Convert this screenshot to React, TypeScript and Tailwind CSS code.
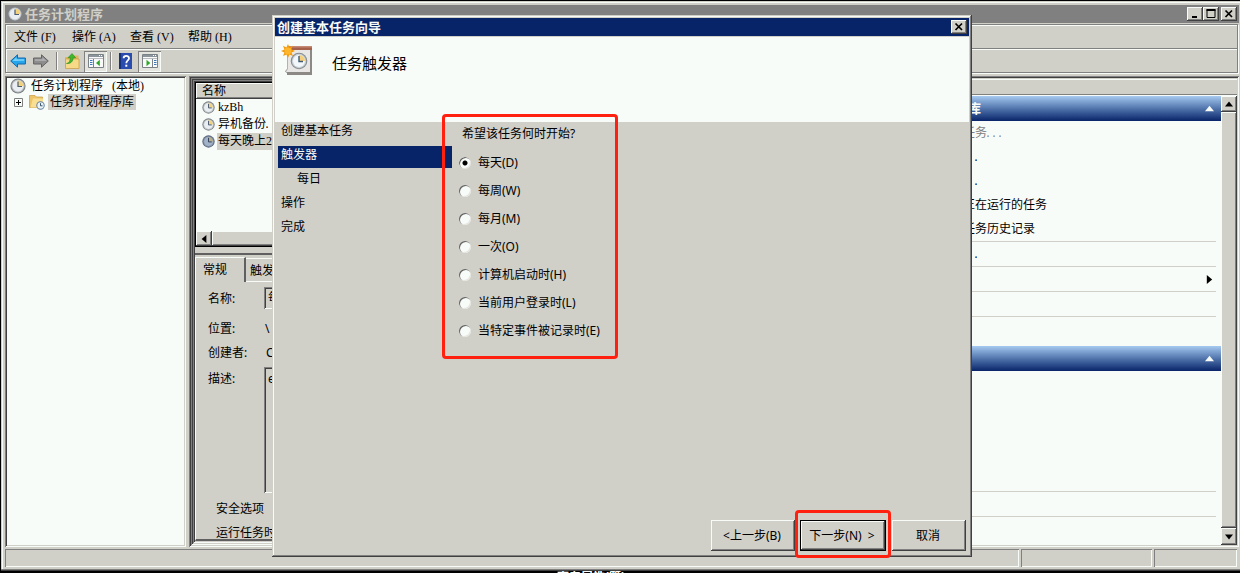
import { useState } from "react";
import type { ReactNode } from "react";
import clsx from "clsx";

const SERIF = "font-['Liberation_Serif','Noto_Sans_CJK_SC',serif]";
const SANS = "font-['Noto_Sans','Noto_Sans_CJK_SC',sans-serif]";

const RAISED =
  "bg-[#d0cfc8] shadow-[inset_-1px_-1px_0_#404040,inset_1px_1px_0_#f8fcf8,inset_-2px_-2px_0_#808080]";
const SUNKEN =
  "shadow-[inset_1px_1px_0_#808080,inset_-1px_-1px_0_#f8fcf8,inset_2px_2px_0_#404040,inset_-2px_-2px_0_#d0cfc8]";
const STATUS = "shadow-[inset_1px_1px_0_#808080,inset_-1px_-1px_0_#f8fcf8]";

const MENUS = ["文件 (F)", "操作 (A)", "查看 (V)", "帮助 (H)"];

const TASKS = [
  { name: "kzBh", dots: false, selected: false },
  { name: "异机备份", dots: true, selected: false },
  { name: "每天晚上2点", dots: false, selected: true },
];

const STEPS = [
  { label: "创建基本任务", active: false, nested: false },
  { label: "触发器", active: true, nested: false },
  { label: "每日", active: false, nested: true },
  { label: "操作", active: false, nested: false },
  { label: "完成", active: false, nested: false },
];

const TRIGGERS = [
  { id: "daily", label: "每天(D)" },
  { id: "weekly", label: "每周(W)" },
  { id: "monthly", label: "每月(M)" },
  { id: "once", label: "一次(O)" },
  { id: "startup", label: "计算机启动时(H)" },
  { id: "logon", label: "当前用户登录时(L)" },
  { id: "event", label: "当特定事件被记录时(E)" },
];

const ACTIONS = [
  { label: "创建基本任务", dots: true, disabled: true },
  { label: "创建任务", dots: true, disabled: false },
  { label: "导入任务", dots: true, disabled: false },
  { label: "显示所有正在运行的任务", dots: false, disabled: false },
  { label: "启用所有任务历史记录", dots: false, disabled: false },
];

function Dots() {
  return <span className="-ml-[2px] font-['Liberation_Mono',monospace] text-[10px]">...</span>;
}

function Clock({ className, dark }: { className: string; dark?: boolean }) {
  return (
    <svg viewBox="0 0 16 16" className={className} aria-hidden="true">
      <circle cx="8" cy="8" r="7.6" fill={dark ? "#56647c" : "#7c8084"} />
      <circle cx="8" cy="8" r="6.5" fill={dark ? "#8796ac" : "#c0c4c8"} />
      <circle cx="8" cy="8" r="5.4" fill={dark ? "#a3b3c8" : "#e8eef2"} />
      <path d="M8 8V2.6A5.4 5.4 0 0 1 13.4 8Z" fill={dark ? "#b9ad84" : "#f2d27c"} />
      <path d="M8 3.5V8.5H12" fill="none" stroke={dark ? "#33415c" : "#4c5c70"} strokeWidth="1.2" />
    </svg>
  );
}

function Arrow({ back }: { back?: boolean }) {
  return (
    <svg viewBox="0 0 16 14" className="h-[14px] w-4" aria-hidden="true">
      <path
        d={back ? "M.7 7 7.5 .8V4H15.4V10H7.5V13.2Z" : "M15.3 7 8.5 .8V4H.6V10H8.5V13.2Z"}
        fill={back ? "#27a5ea" : "#8d8d8d"}
        stroke={back ? "#1269ae" : "#636363"}
      />
      <path
        d={back ? "M2.5 7 6.5 3.3V5.2H14.2V6.8Z" : "M13.5 7 9.5 3.3V5.2H1.8V6.8Z"}
        fill={back ? "#7cd3fa" : "#b0b0b0"}
      />
    </svg>
  );
}

function FolderUp() {
  return (
    <svg viewBox="0 0 16 16" className="size-4" aria-hidden="true">
      <path d="M1 4H6L8 2.5H14.5V15H1Z" fill="#e2b75a" />
      <path d="M1.5 6H15V15.5H1.5Z" fill="#f7da88" stroke="#c79a41" strokeWidth=".7" />
      <path d="M2.5 10.5C5 10 6.2 8 6.4 4.7H4L8 .6 11.6 4.7H9.2C9 8.5 6.5 11 2.5 10.5Z" fill="#3fb82c" stroke="#268b1c" strokeWidth=".6" />
    </svg>
  );
}

function PaneIcon({ flip }: { flip?: boolean }) {
  return (
    <svg viewBox="0 0 16 14" className="h-[14px] w-4" aria-hidden="true">
      <path d="M.5.5H15.5V13.5H.5Z" fill="#fafafa" stroke="#7b8186" />
      <path d="M1 1H15V3H1Z" fill="#8d959c" />
      <path d="M11 1.5H12M13 1.5H14" stroke="#fff" />
      <path d="M1 4.5H15" stroke="#b8bcc0" />
      <path d={flip ? "M10.5 5V13" : "M5.5 5V13"} stroke="#7b8186" />
      <path d={flip ? "M12 6.5H14.5M12 8.5H14.5M12 10.5H14.5" : "M2 6.5H4.5M2 8.5H4.5M2 10.5H4.5"} stroke="#3c78b8" />
      <path d={flip ? "M4.5 5.7V12.3L8.3 9Z" : "M11.8 5.7V12.3L8 9Z"} fill="#2fa82a" />
    </svg>
  );
}

function HelpIcon() {
  return (
    <svg viewBox="0 0 13 16" className="h-4 w-[13px]" aria-hidden="true">
      <path d="M0 0H13V16H0Z" fill="#2a4cae" />
      <path d="M0 0H2V16H0Z" fill="#17307c" />
      <path d="M4.6 5.2C4.6 2 10 2 10 5.2 10 7.5 7.3 7.3 7.3 10.2" fill="none" stroke="#fff" strokeWidth="1.8" />
      <path d="M6.3 11.7H8.3V13.7H6.3Z" fill="#fff" />
    </svg>
  );
}

function LibraryIcon() {
  return (
    <svg viewBox="0 0 16 16" className="size-4 shrink-0" aria-hidden="true">
      <path d="M.5 1.5H6L7.5 3H13.5V13.5H.5Z" fill="#edc566" stroke="#c59a43" strokeWidth=".7" />
      <path d="M4 4.5H14V13.5H1.5Z" fill="#f9df94" />
      <circle cx="11.5" cy="11.5" r="4.2" fill="#67829b" />
      <circle cx="11.5" cy="11.5" r="3.2" fill="#e8f2f8" />
      <path d="M11.5 9.2V11.8H13.5" fill="none" stroke="#38536c" />
    </svg>
  );
}

function WizardIcon() {
  return (
    <svg viewBox="0 0 32 32" className="size-8" aria-hidden="true">
      <path d="M6 3H31V31H6V29L4 27.5 6 25Z" fill="#8d8a86" />
      <path d="M6 6H29V28H5L6 25Z" fill="#e9e7e5" />
      <path d="M6.5 6V25L4.5 27.5" fill="none" stroke="#b5b2ae" />
      <path d="M7 2H31V6H7Z" fill="#a5614a" />
      <path d="M7 2H31V3.5H7Z" fill="#c58a74" />
      <circle cx="18" cy="17" r="8.3" fill="#878d91" />
      <circle cx="18" cy="17" r="7.2" fill="#c9d2d6" />
      <circle cx="18" cy="17" r="6" fill="#f1f7fa" />
      <path d="M18 17V11A6 6 0 0 1 24 17Z" fill="#f5cf79" />
      <path d="M18 12V17.5H22" fill="none" stroke="#405a74" strokeWidth="1.4" />
      <path d="M7 0 8.4 3.4 11.8 1.8 10.4 5.3 14 7 10.4 8.4 12 12 8.4 10.4 7 14 5.4 10.4 2 12 3.5 8.4 0 7 3.5 5.4 2 1.8 5.4 3.4Z" fill="#f29a0a" />
      <circle cx="7" cy="7" r="3.4" fill="#ffb62a" />
    </svg>
  );
}

function Triangle({ dir, className }: { dir: "up" | "down" | "left" | "right"; className: string }) {
  const paths = { up: "M0 8 5 2 10 8Z", down: "M0 2 5 8 10 2Z", left: "M8 0 2 5 8 10Z", right: "M2 0 8 5 2 10Z" };
  return (
    <svg viewBox="0 0 10 10" className={className} fill="currentColor" aria-hidden="true">
      <path d={paths[dir]} />
    </svg>
  );
}

function CaptionButton({ label, children }: { label: string; children: ReactNode }) {
  return (
    <button type="button" aria-label={label} className={clsx("flex h-[14px] w-4 items-center justify-center", RAISED)}>
      <svg viewBox="0 0 10 10" className="size-[10px]" fill="none" stroke="#000" strokeWidth="2" aria-hidden="true">
        {children}
      </svg>
    </button>
  );
}

function Separator() {
  return <span className="h-[18px] w-[2px] border-l border-r border-l-[#808080] border-r-[#f8fcf8]" />;
}

function ToolToggle({ label, flip }: { label: string; flip?: boolean }) {
  return (
    <button
      type="button"
      aria-label={label}
      aria-pressed="true"
      className={clsx("flex h-[21px] w-[23px] items-center justify-center bg-[#e4e5df]", STATUS)}
    >
      <PaneIcon flip={flip} />
    </button>
  );
}

function TreePane() {
  return (
    <div className={clsx("w-[181px] shrink-0 p-[2px]", SUNKEN)}>
      <div className={clsx("h-full bg-[#f8fcf8] text-[12px] leading-[16px]", SERIF)}>
        <div className="flex items-center gap-1 pl-[3px]">
          <Clock className="size-4 shrink-0" />
          <span className="pl-px">任务计划程序&nbsp;&nbsp; (本地)</span>
        </div>
        <div className="flex items-center pl-[7px]">
          <svg viewBox="0 0 9 9" className="mr-[6px] size-[9px]" fill="none" aria-hidden="true">
            <path d="M.5.5H8.5V8.5H.5Z" stroke="#808080" />
            <path d="M2 4.5H7M4.5 2V7" stroke="#000" />
          </svg>
          <LibraryIcon />
          <span className="ml-[3px] bg-[#d0cfc8] px-[2px]">任务计划程序库</span>
        </div>
      </div>
    </div>
  );
}

function TaskList() {
  return (
    <div className="flex h-[165px] shrink-0 flex-col border-t border-b border-l border-black bg-[#f8fcf8]">
      <div className={clsx("h-4 shrink-0 pl-[6px] text-[12px] leading-[16px]", SERIF, RAISED)}>名称</div>
      <ul className={clsx("grow text-[12px] leading-[17px]", SERIF)}>
        {TASKS.map((task) => (
          <li key={task.name} className="flex h-[17px] items-center gap-[2px] pl-[6px]">
            <Clock className="size-[13px] shrink-0" dark={task.selected} />
            <span className={clsx("px-px", task.selected && "w-full bg-[#d0cfc8]")}>
              {task.name}
              {task.dots && <Dots />}
            </span>
          </li>
        ))}
      </ul>
      <div className="flex h-[15px] shrink-0">
        <button type="button" aria-label="向左滚动" className={clsx("flex w-4 items-center justify-center", RAISED)}>
          <Triangle dir="left" className="size-[8px]" />
        </button>
        <div className={clsx("grow", RAISED)} />
      </div>
    </div>
  );
}

function TaskDetails() {
  return (
    <div className={clsx("flex min-h-0 grow flex-col text-[12px]", SANS)}>
      <div className="flex h-[25px] shrink-0 items-end">
        <button type="button" className="h-[25px] w-[51px] border-t border-r-2 border-l border-t-[#f8fcf8] border-r-[#606060] border-l-[#f8fcf8] pr-[10px] leading-[20px]">
          常规
        </button>
        <button type="button" className="h-[24px] w-[60px] border-t border-b border-[#f8fcf8] pl-[4px] text-left leading-[24px]">
          触发器
        </button>
      </div>
      <div className="min-h-0 grow border-b-2 border-l border-b-[#606060] border-l-[#f8fcf8] pb-px">
        <div className="h-full overflow-hidden pt-[5px] pl-3 leading-[24px]">
          <div className="grid grid-cols-[56px_1fr] gap-y-px">
            <label htmlFor="task-name">名称:</label>
            <input id="task-name" readOnly value="每天晚上2点" className={clsx("h-[22px] w-[300px] px-1", SUNKEN)} />
          </div>
          <dl className="mt-[6px] grid grid-cols-[57px_1fr]">
            <dt>位置:</dt>
            <dd>\</dd>
            <dt>创建者:</dt>
            <dd className="pl-px">CRM</dd>
          </dl>
          <div className="mt-[2px] grid grid-cols-[56px_1fr]">
            <label htmlFor="task-note">描述:</label>
            <textarea id="task-note" readOnly value="exp" className={clsx("h-[126px] w-[300px] resize-none px-1", SUNKEN)} />
          </div>
          <div className="pt-1 pl-2">
            <p>安全选项</p>
            <p>运行任务时</p>
          </div>
        </div>
      </div>
    </div>
  );
}

function SectionBar({ title }: { title: string }) {
  return (
    <div className="flex h-[25px] items-center justify-between bg-linear-to-b from-[#a6caf0] to-[#0a246a] pr-[7px] pl-px text-[13px] leading-[24px] font-bold text-[#f8fcf8]">
      <span>{title}</span>
      <Triangle dir="up" className="size-[9px]" />
    </div>
  );
}

function ActionsPane() {
  return (
    <div className={clsx("flex w-[352px] shrink-0 flex-col p-[2px] text-[12px]", SERIF, SUNKEN)}>
      <div className="mt-px h-4 shrink-0 border-t border-b border-t-[#f8fcf8] border-b-[#808080] pl-1 leading-[14px]">操作</div>
      <div className="flex min-h-0 grow bg-[#f8fcf8] pt-px">
        <div className="grow">
          <SectionBar title="任务计划程序库" />
          <ul className="mr-[5px] pl-[26px] leading-[24px]">
            {ACTIONS.map((a) => (
              <li key={a.label} className={clsx("h-6", a.disabled && "text-[#808080]")}>
                {a.label}
                {a.dots && <Dots />}
              </li>
            ))}
          </ul>
          <ul className="mr-[5px] leading-[24px]">
            <li className="h-[25px] border-t border-[#d0cfc8] pl-[26px]">
              新文件夹
              <Dots />
            </li>
            <li className="flex h-[25px] items-center justify-between border-t border-[#d0cfc8] pr-[2px] pl-[26px]">
              查看 <Triangle dir="right" className="size-[9px]" />
            </li>
            <li className="h-[25px] border-t border-[#d0cfc8] pl-[26px]">刷新</li>
            <li className="h-[30px] border-t border-[#d0cfc8]" />
          </ul>
          <SectionBar title="所选项" />
          <ul className="mr-[5px] pt-[120px] leading-[24px]">
            <li className="h-[25px] border-t border-[#d0cfc8]" />
            <li className="h-[25px] border-t border-[#d0cfc8]" />
          </ul>
        </div>
        <div className="flex w-4 shrink-0 flex-col">
          <button type="button" aria-label="向上滚动" className={clsx("flex h-4 items-center justify-center", RAISED)}>
            <Triangle dir="up" className="size-[8px]" />
          </button>
          <div className={clsx("grow", RAISED)} />
          <button type="button" aria-label="向下滚动" className={clsx("flex h-[17px] items-center justify-center", RAISED)}>
            <Triangle dir="down" className="size-[8px]" />
          </button>
        </div>
      </div>
    </div>
  );
}

function Wizard() {
  const [trigger, setTrigger] = useState("daily");

  return (
    <div
      role="dialog"
      aria-labelledby="wizard-title"
      className={clsx(
        "absolute top-[15px] left-[272px] flex h-[542px] w-[700px] flex-col bg-[#d0cfc8] p-[3px] text-[12px]",
        "shadow-[inset_-1px_-1px_0_#404040,inset_1px_1px_0_#d0cfc8,inset_-2px_-2px_0_#808080,inset_2px_2px_0_#f8fcf8]",
        SANS,
      )}
    >
      <div className="flex h-[18px] shrink-0 items-center justify-between bg-[#082468] pr-[2px] pl-[2px] text-[#f8fcf8]">
        <h2 id="wizard-title" className="text-[13px] leading-[18px] font-bold">
          创建基本任务向导
        </h2>
        <CaptionButton label="关闭向导">
          <path d="M1.5 1.5 8 8M8 1.5 1.5 8" strokeWidth="1.7" />
        </CaptionButton>
      </div>

      <div className="mt-px flex h-[85px] shrink-0 items-start gap-[19px] bg-[#f8fcf8] pt-[7px] pl-[6px]">
        <WizardIcon />
        <h3 className="pt-[8px] text-[15px] leading-[22px]">任务触发器</h3>
      </div>

      <div className="flex min-h-0 grow">
        <ol className="w-[177px] shrink-0 pl-[3px]">
          {STEPS.map((step) => (
            <li key={step.label} className="h-6 pb-[2px]">
              <span
                className={clsx(
                  "block h-[22px] leading-[18px]",
                  step.nested ? "pl-[19px]" : "pl-[3px]",
                  step.active && "bg-[#082468] text-[#f8fcf8]",
                )}
              >
                {step.label}
              </span>
            </li>
          ))}
        </ol>

        <fieldset className="pl-[7px]">
          <legend className="py-[3px] pl-[3px] leading-[18px]">希望该任务何时开始?</legend>
          <div className="pt-[3px]">
            {TRIGGERS.map((t) => (
              <label key={t.id} className="flex h-7 items-center gap-[7px]">
                <input
                  type="radio"
                  name="trigger"
                  checked={trigger === t.id}
                  onChange={() => setTrigger(t.id)}
                  className="size-[12px] appearance-none rounded-full bg-[#f8fcf8] shadow-[inset_1px_1px_0_#606060,inset_-1px_-1px_0_#e4e4e0] checked:bg-[radial-gradient(circle,#000_2px,#f8fcf8_3px)]"
                />
                {t.label}
              </label>
            ))}
          </div>
        </fieldset>
      </div>

      <div className="flex shrink-0 justify-end pr-[3px] pb-[3px]">
        <button type="button" className={clsx("h-[31px] w-[84px] pr-[2px]", RAISED)}>
          &lt;上一步(B)
        </button>
        <button type="button" className="mr-[6px] ml-[5px] h-[31px] w-[86px] border border-black bg-[#d0cfc8] pr-[2px] shadow-[inset_-1px_-1px_0_#404040,inset_1px_1px_0_#f8fcf8,inset_-2px_-2px_0_#808080]">
          下一步(N)&nbsp; &gt;
        </button>
        <button type="button" className={clsx("h-[31px] w-[74px] pr-[2px]", RAISED)}>
          取消
        </button>
      </div>

      {/* highlight frames over the choices and the next button */}
      <div className="pointer-events-none absolute top-[99px] left-[170px] h-[245px] w-[176px] rounded-[4px] border-3 border-[#ff2010]" />
      <div className="pointer-events-none absolute right-[81px] bottom-[-1px] h-[48px] w-[96px] rounded-[4px] border-3 border-[#ff2010]" />
    </div>
  );
}

export default function App() {
  return (
    <main className="relative flex h-screen flex-col overflow-hidden bg-black pt-px pl-px text-black">
      <div className="flex min-h-0 grow flex-col bg-[#d0cfc8] pt-1 pr-px pb-1 pl-1 shadow-[inset_0_-1px_0_#404040,inset_0_-2px_0_#808080,inset_1px_1px_0_#d0cfc8,inset_2px_2px_0_#f8fcf8]">
        <div className={clsx("flex h-[18px] shrink-0 items-center bg-[#808080] pr-[2px] pl-[2px]", SANS)}>
          <Clock className="size-4" />
          <h1 className="pl-[2px] text-[13px] leading-[18px] font-bold text-[#d0cfc8]">任务计划程序</h1>
          <div className="ml-auto flex">
            <CaptionButton label="最小化">
              <path d="M2 8H7" />
            </CaptionButton>
            <CaptionButton label="最大化">
              <path d="M.5 1H9.5" />
              <path d="M1 .5V8.5H9V.5" strokeWidth="1" />
            </CaptionButton>
            <span className="w-[2px]" />
            <CaptionButton label="关闭">
              <path d="M1.5 1.5 8 8M8 1.5 1.5 8" strokeWidth="1.7" />
            </CaptionButton>
          </div>
        </div>

        <div className="mt-px mr-px shrink-0 border border-[#808080] shadow-[1px_1px_0_#f8fcf8,inset_1px_1px_0_#f8fcf8]">
          <nav className={clsx("flex h-6 items-center gap-4 border-b border-[#808080] pl-2 text-[12px] leading-[24px]", SERIF)}>
            {MENUS.map((menu) => (
              <button key={menu} type="button" className="w-[42px] text-left whitespace-nowrap">
                {menu}
              </button>
            ))}
          </nav>
          <div className="flex h-[23px] items-center border-t border-[#f8fcf8] pl-[4px]">
            <button type="button" aria-label="后退" className="mr-[7px]">
              <Arrow back />
            </button>
            <button type="button" aria-label="前进" className="mr-[7px]">
              <Arrow />
            </button>
            <Separator />
            <button type="button" aria-label="上移" className="mr-[4px] ml-[6px]">
              <FolderUp />
            </button>
            <ToolToggle label="显示/隐藏控制台树" />
            <span className="w-[3px]" />
            <Separator />
            <button type="button" aria-label="帮助" className="mr-[6px] ml-[7px]">
              <HelpIcon />
            </button>
            <ToolToggle label="显示/隐藏操作窗格" flip />
          </div>
        </div>

        <div className="mt-[3px] flex min-h-0 grow gap-[3px]">
          <TreePane />
          <div className={clsx("min-w-0 grow p-[2px]", SUNKEN)}>
            <div className={clsx("h-full p-[2px]", SUNKEN)}>
              <div className={clsx("h-full p-[2px]", SUNKEN)}>
                <div className="flex h-full flex-col overflow-hidden">
                  <TaskList />
                  <div className="mt-[6px] mb-[2px] h-[2px] shrink-0 bg-[#606060]" />
                  <TaskDetails />
                </div>
              </div>
            </div>
          </div>
          <ActionsPane />
        </div>

        <div className="mt-[2px] mr-[2px] flex h-[18px] shrink-0 gap-[2px]">
          <div className={clsx("grow", STATUS)} />
          <div className={clsx("w-[131px]", STATUS)} />
          <div className={clsx("w-[83px]", STATUS)} />
        </div>
      </div>
      <div className={clsx("h-[2px] shrink-0 overflow-hidden pl-[556px] text-[12px] leading-[12px] font-bold text-white", SANS)}>
        查看属性(管)
      </div>

      <Wizard />
    </main>
  );
}
